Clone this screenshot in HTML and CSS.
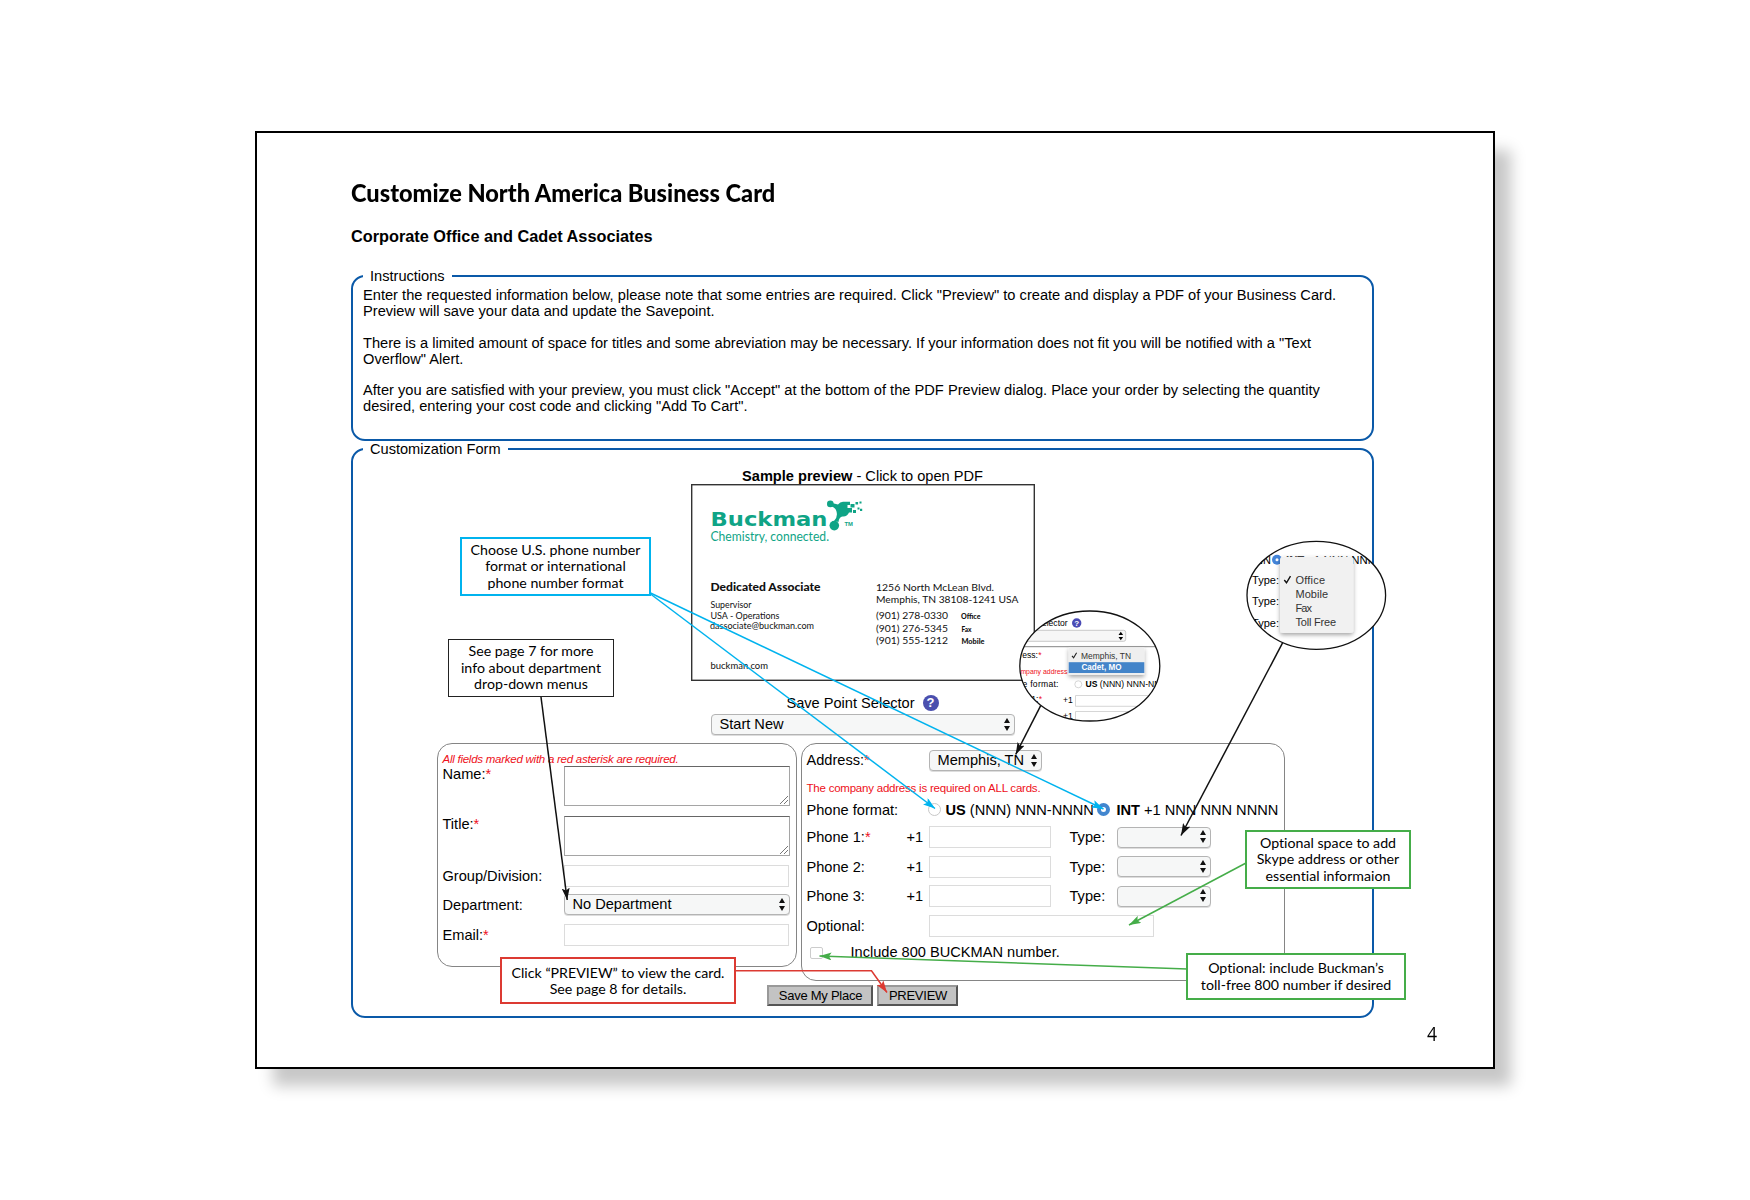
FILE: index.html
```html
<!DOCTYPE html>
<html lang="en">
<head>
<meta charset="utf-8">
<title>Customize North America Business Card</title>
<link rel="stylesheet" href="styles.css">
</head>
<body>
<main class="page">
  <h1 class="title"><span>Customize North America Business Card</span></h1>
  <h2 class="subtitle">Corporate Office and Cadet Associates</h2>

  <fieldset class="box box-instructions">
    <legend>Instructions</legend>
    <p>Enter the requested information below, please note that some entries are required. Click "Preview" to create and display a PDF of your Business Card.<br>Preview will save your data and update the Savepoint.</p>
    <p>There is a limited amount of space for titles and some abreviation may be necessary. If your information does not fit you will be notified with a "Text<br>Overflow" Alert.</p>
    <p>After you are satisfied with your preview, you must click "Accept" at the bottom of the PDF Preview dialog. Place your order by selecting the quantity<br>desired, entering your cost code and clicking "Add To Cart".</p>
  </fieldset>

  <fieldset class="box box-form">
    <legend>Customization Form</legend>
    <div class="form">
      <div class="caption"><b>Sample preview</b> - Click to open PDF</div>
      <svg class="card" width="344" height="197" viewBox="691 484 344 197">
        <rect x="691.7" y="484.7" width="342.6" height="195.6" fill="#fff" stroke="#333" stroke-width="1.4"/>
        <g fill="#0fa486">
          <text class="logo" x="710.5" y="526" textLength="117" lengthAdjust="spacingAndGlyphs">Buckman</text>
          <text class="tagline" x="710.5" y="541" textLength="118.500" lengthAdjust="spacingAndGlyphs">Chemistry, connected.</text>
          <text class="tm" x="844.5" y="526.2" textLength="8.500" lengthAdjust="spacingAndGlyphs">TM</text>
          <circle cx="830.3" cy="503.9" r="3.3"/>
          <circle cx="834.3" cy="525.6" r="4.8"/>
          <path d="M830 502.500 L838 504.500 Q840 501.800 843 501.800 H850 V505 H847.500 V508 H852 V512.500 H849 Q847 517 842.500 516.500 Q839 517 838.500 522 L834 521 Q838 517 836.500 511.500 Q836 507.500 829.500 505.500 Z"/>
          <path d="M850.500 504 h4 v3.500 h-4z M855.500 502 h2.600 v2.600 h-2.600z M859.500 501.500 h2 v2 h-2z M853 510 h3 v3 h-3z M857.500 507.500 h2 v2 h-2z M860 508.800 h2.200 v2.200 h-2.200z"/>
        </g>
        <g class="card-text">
          <text class="card-name" x="710.500" y="591" textLength="110" lengthAdjust="spacingAndGlyphs">Dedicated Associate</text>
          <text class="small" x="710.500" y="608" textLength="41" lengthAdjust="spacingAndGlyphs">Supervisor</text>
          <text class="small" x="710.500" y="618.500" textLength="69" lengthAdjust="spacingAndGlyphs">USA - Operations</text>
          <text class="small" x="710" y="629.300" textLength="104" lengthAdjust="spacingAndGlyphs">dassociate@buckman.com</text>
          <text class="small" x="710.500" y="669" textLength="57.500" lengthAdjust="spacingAndGlyphs">buckman.com</text>
          <text x="876" y="591" textLength="118" lengthAdjust="spacingAndGlyphs">1256 North McLean Blvd.</text>
          <text x="876" y="603" textLength="142.500" lengthAdjust="spacingAndGlyphs">Memphis, TN 38108-1241 USA</text>
          <text x="876" y="619" textLength="72" lengthAdjust="spacingAndGlyphs">(901) 278-0330</text>
          <text x="876" y="631.500" textLength="72" lengthAdjust="spacingAndGlyphs">(901) 276-5345</text>
          <text x="876" y="643.800" textLength="72" lengthAdjust="spacingAndGlyphs">(901) 555-1212</text>
          <text class="tag" x="961" y="619.300" textLength="19.500" lengthAdjust="spacingAndGlyphs">Office</text>
          <text class="tag" x="961.500" y="631.700" textLength="10" lengthAdjust="spacingAndGlyphs">Fax</text>
          <text class="tag" x="961.500" y="644" textLength="23" lengthAdjust="spacingAndGlyphs">Mobile</text>
        </g>
      </svg>
      <div class="save-label">Save Point Selector <span class="help">?</span></div>
      <div class="select select-save">Start New<i class="arrows"></i></div>

      <div class="panels">
        <section class="panel panel-left">
          <p class="note note-italic">All fields marked with a red asterisk are required.</p>
          <div class="row row-area"><label>Name:<em>*</em></label><div class="area"><svg width="9" height="9" viewBox="0 0 9 9"><path d="M1 9 L9 1 M5 9 L9 5"/></svg></div></div>
          <div class="row row-area row-title"><label>Title:<em>*</em></label><div class="area"><svg width="9" height="9" viewBox="0 0 9 9"><path d="M1 9 L9 1 M5 9 L9 5"/></svg></div></div>
          <div class="row row-group"><label>Group/Division:</label><div class="input"></div></div>
          <div class="row row-dept"><label>Department:</label><div class="select">No Department<i class="arrows"></i></div></div>
          <div class="row"><label>Email:<em>*</em></label><div class="input"></div></div>
        </section>
        <section class="panel panel-right">
          <div class="row row-address"><label>Address:<em>*</em></label><div class="select select-address">Memphis, TN<i class="arrows"></i></div></div>
          <p class="note">The company address is required on ALL cards.</p>
          <div class="row row-format"><label>Phone format:</label><span class="radio"></span><span class="opt opt-us"><b>US</b> (NNN) NNN-NNNN</span><span class="radio radio-on"></span><span class="opt"><b>INT</b> +1 NNN NNN NNNN</span></div>
          <div class="row row-phone"><label>Phone 1:<em>*</em></label><span class="prefix">+1</span><div class="input"></div><span class="type">Type:</span><div class="select select-type"><i class="arrows"></i></div></div>
          <div class="row row-phone"><label>Phone 2:</label><span class="prefix">+1</span><div class="input"></div><span class="type">Type:</span><div class="select select-type"><i class="arrows"></i></div></div>
          <div class="row row-phone"><label>Phone 3:</label><span class="prefix">+1</span><div class="input"></div><span class="type">Type:</span><div class="select select-type"><i class="arrows"></i></div></div>
          <div class="row row-optional"><label>Optional:</label><div class="input"></div></div>
          <div class="row row-check"><span class="checkbox"></span><span class="check-label">Include 800 BUCKMAN number.</span></div>
        </section>
      </div>

      <div class="buttons"><div class="button button-save">Save My Place</div><div class="button button-preview">PREVIEW</div></div>
    </div>
  </fieldset>

  <div class="page-number">4</div>

  <svg class="overlay" width="1236" height="934" viewBox="257 133 1236 934">
    <defs>
      <clipPath id="lens-a"><ellipse cx="1089.800" cy="666" rx="70" ry="55"/></clipPath>
      <clipPath id="lens-b"><ellipse cx="1316.300" cy="595.300" rx="69.300" ry="54"/></clipPath>
      <filter id="soft" x="-20%" y="-20%" width="140%" height="150%"><feDropShadow dx="0" dy="2" stdDeviation="2" flood-opacity=".35"/></filter>
      <marker id="tip" viewBox="0 0 12 8" refX="12" refY="4" markerWidth="12" markerHeight="8" markerUnits="userSpaceOnUse" orient="auto"><path d="M0 0 L12 4 L0 8 L2.500 4 Z" fill="context-stroke"/></marker>
    </defs>

    <g class="lens-text" clip-path="url(#lens-a)">
      <rect x="1019" y="610" width="142" height="112" fill="#fff"/>
      <text x="1067.700" y="625.800" text-anchor="end">Save Point Selector</text>
      <circle cx="1076.700" cy="623" r="4.700" fill="#4a4bb5"/>
      <text class="q" x="1076.700" y="626" text-anchor="middle">?</text>
      <rect x="1000" y="630.300" width="125.700" height="11" rx="2" fill="#f6f6f6" stroke="#bbb" stroke-width=".8"/>
      <path d="M1118.500 635 l2.300 -3.200 2.300 3.200z M1118.500 637 l2.300 3.200 2.300 -3.200z"/>
      <path d="M1010 646.700 H1165" stroke="#777" stroke-width=".9"/>
      <text x="1038" y="657.800" text-anchor="end">Address:</text><text class="red" x="1038.300" y="657.800">*</text>
      <text class="red tiny" x="1067.500" y="673.500" text-anchor="end">The company address</text>
      <g filter="url(#soft)"><rect x="1068.700" y="647.300" width="75.600" height="27.700" fill="#efefef"/></g>
      <rect x="1068.700" y="662.200" width="75.600" height="10.800" fill="#4384c9"/>
      <path d="M1072 655.800 l1.600 2 3 -5" fill="none" stroke="#222" stroke-width="1.100"/>
      <text x="1081" y="658.600" textLength="50" lengthAdjust="spacingAndGlyphs" fill="#333">Memphis, TN</text>
      <text class="picked" x="1081.500" y="670" textLength="40" lengthAdjust="spacingAndGlyphs">Cadet, MO</text>
      <text x="1058.500" y="686.900" text-anchor="end" textLength="57">Phone format:</text>
      <circle cx="1078.300" cy="684.300" r="3.500" fill="none" stroke="#ccc" stroke-width=".8"/>
      <text x="1085.500" y="687.200"><tspan font-weight="bold">US</tspan> (NNN) NNN-NNNN</text>
      <text x="1038.500" y="702" text-anchor="end">Phone 1:</text><text class="red" x="1038.800" y="702">*</text>
      <text x="1063" y="702.800">+1</text><text x="1063" y="719">+1</text>
      <path d="M1166 695.500 H1075.500 V706.300 H1166 M1166 711.500 H1075.500 V722" fill="none" stroke="#ccc" stroke-width=".8"/>
    </g>
    <ellipse class="lens" cx="1089.800" cy="666" rx="70" ry="55"/>

    <g class="lens-text lens-text-b" clip-path="url(#lens-b)">
      <rect x="1246" y="541" width="141" height="110" fill="#fff"/>
      <text x="1271" y="563.500" text-anchor="end">NNNN</text>
      <circle cx="1277" cy="559.800" r="5" fill="#4384d8"/><circle cx="1277" cy="559.800" r="1.500" fill="#fff"/>
      <text x="1286" y="563.500" textLength="90" lengthAdjust="spacingAndGlyphs"><tspan font-weight="bold">INT</tspan> +1 NNN NNN</text>
      <text x="1279" y="583.500" text-anchor="end">Type:</text>
      <text x="1279" y="605" text-anchor="end">Type:</text>
      <text x="1279" y="626.500" text-anchor="end">Type:</text>
      <g filter="url(#soft)"><rect x="1280" y="556.700" width="73.300" height="76.300" rx="3" fill="#f1f1f1"/></g>
      <path d="M1284.300 580 l2.200 2.800 4 -6.600" fill="none" stroke="#111" stroke-width="1.400"/>
      <g fill="#333">
        <text x="1295.500" y="583.500" textLength="29.500">Office</text>
        <text x="1295.500" y="597.500" textLength="32.500">Mobile</text>
        <text x="1295.500" y="612" textLength="16.500">Fax</text>
        <text x="1295.500" y="626" textLength="40.500">Toll Free</text>
      </g>
    </g>
    <ellipse class="lens" cx="1316.300" cy="595.300" rx="69.300" ry="54"/>

    <g class="pointer pointer-black">
      <path d="M541 697 L567.200 900"/>
      <path d="M1040.700 705.700 L1015.700 754.500"/>
      <path d="M1282.700 642.700 L1181 835.500"/>
    </g>
    <g class="pointer pointer-blue">
      <path d="M650.500 594 L935 808.500"/>
      <path d="M650.500 593 L1103.500 809"/>
    </g>
    <path class="pointer pointer-red" d="M735 970.700 H871.500 L887 992.500"/>
    <g class="pointer pointer-green">
      <path d="M1246 863 L1129 925"/>
      <path d="M1187.500 969 L819.500 956"/>
    </g>
  </svg>

  <aside class="callout callout-phone">Choose U.S. phone number<br>format or international<br>phone number format</aside>
  <aside class="callout callout-dept">See page 7 for more<br>info about department<br>drop-down menus</aside>
  <aside class="callout callout-preview">Click “PREVIEW” to view the card.<br>See page 8 for details.</aside>
  <aside class="callout callout-skype">Optional space to add<br>Skype address or other<br>essential informaion</aside>
  <aside class="callout callout-tollfree">Optional: include Buckman’s<br>toll-free 800 number if desired</aside>
</main>
</body>
</html>
```
FILE: styles.css
```css
* { box-sizing: border-box; }

body {
  margin: 0;
  padding: 131px 255px;
  height: 1200px;
  overflow: hidden;
  background: #fff;
  color: #000;
  font: 14.6px/16px "Liberation Sans", Arial, sans-serif;
}

.page {
  position: relative;
  width: 1240px;
  height: 938px;
  padding: 44px 119px 0 94px;
  border: 2px solid #000;
  background: #fff;
  box-shadow: 17px 18px 14px -1px rgba(0, 0, 0, .22);
}

.title { margin: 0; height: 30px; font: 900 25px/30px Lato, sans-serif; white-space: nowrap; }
.title span { display: inline-block; transform: scaleX(.942); transform-origin: 0 50%; }
.subtitle { margin: 20px 0 0; height: 18px; font-size: 16.3px; line-height: 18px; }

.box {
  display: block;
  width: 1023px;
  min-width: 0;
  margin: 0;
  padding: 0 10px;
  border: 2px solid #0a59a8;
  border-radius: 14px;
}
.box legend { height: 16px; padding: 0 7px; line-height: 17px; }
.box-instructions { height: 173px; margin-top: 23px; padding-top: 3px; }
.box-instructions p { margin: 0 0 16px; font-size: 14.65px; line-height: 16px; white-space: nowrap; }
.box-instructions p + p { margin-bottom: 15px; }
.box-form { height: 577px; }

.form { display: flex; flex-direction: column; align-items: center; padding-top: 11px; }
.caption { height: 16px; line-height: 17px; }
.card { display: block; }

.card-text { font-family: Lato, sans-serif; font-size: 10px; fill: #111; }
.card-text .card-name { font-size: 10.5px; font-weight: 900; }
.card-text .small { font-size: 8.5px; }
.card-text .tag { font-size: 6.8px; font-weight: 900; }
.logo { font: bold 19.5px "DejaVu Sans", sans-serif; }
.tagline { font: 13.4px Lato, sans-serif; }
.tm { font: bold 5px "Liberation Sans", sans-serif; }

.save-label { display: flex; align-items: center; gap: 8px; height: 16px; margin-top: 14px; }
.help {
  width: 16px;
  height: 16px;
  border-radius: 50%;
  background: #4a4fae;
  color: #fff;
  font-size: 13px;
  font-weight: bold;
  text-align: center;
}

.select {
  display: flex;
  align-items: center;
  justify-content: space-between;
  width: 226px;
  height: 21px;
  padding: 0 4px 1px 8px;
  border: 1px solid #b4b4b4;
  border-radius: 4px;
  background: #f6f7f7;
  box-shadow: 0 1px 0 #ddd;
}
.arrows { display: grid; gap: 3px; margin-left: auto; }
.arrows::before, .arrows::after {
  content: "";
  border: 3.500px solid transparent;
}
.arrows::before { border-top: 0; border-bottom: 5px solid #111; }
.arrows::after { border-bottom: 0; border-top: 5px solid #111; }
.select-save { width: 304px; margin-top: 3px; }

.panels { display: flex; align-items: flex-start; gap: 4px; margin: 8px 4px 0 0; }
.panel { border: 1px solid #858585; border-radius: 15px; }
.panel-left { width: 360px; height: 224px; padding: 8px 0 0 5px; }
.panel-right { width: 484px; height: 238px; padding: 6px 0 0 5px; }

.note { margin: 0; height: 14px; color: #ee1020; font-size: 11.5px; letter-spacing: -.22px; line-height: 14px; white-space: nowrap; }
.note-italic { font-style: italic; letter-spacing: -.25px; }
.row { display: flex; align-items: center; height: 22px; white-space: nowrap; }
.row em { color: #ee1020; font-style: normal; }
.panel-left label { width: 121px; }
.panel-right label { width: 122px; }

.row-area { align-items: flex-start; height: 50px; }
.row-title { height: 49px; }
.area {
  display: flex;
  align-items: flex-end;
  justify-content: flex-end;
  width: 226px;
  height: 40px;
  padding: 1px;
  border: 1px solid #a5a5a5;
  border-top-color: #666;
}
.area path { fill: none; stroke: #777; stroke-width: 1; }
.input { width: 225px; height: 22px; border: 1px solid #dcdcdc; }
.row-group { margin-bottom: 7px; }
.row-dept { height: 21px; margin-bottom: 9px; }

.row-address { height: 21px; margin-bottom: 10px; }
.row-address label { padding-bottom: 1px; }
.select-address { width: 113px; }
.row-format { height: 21px; margin-top: 4px; }
.radio {
  flex: none;
  width: 13px;
  height: 13px;
  margin-left: -1px;
  border: 1px solid #c8c8c8;
  border-radius: 50%;
}
.radio-on { margin-left: 3px; border: 4.500px solid #4286cf; background: #fff; }
.opt { margin-left: 7px; }
.opt-us { width: 148px; margin-left: 5px; }
.row-phone { margin-top: 5px; }
.row-format + .row-phone { margin-top: 6px; }
.row-phone + .row-phone { margin-top: 7.500px; }
.row-phone label { width: 100px; }
.prefix { width: 22px; }
.row-phone .input { width: 122px; }
.type { width: 47px; margin-left: 19px; }
.select-type { width: 94px; }
.row-optional { margin-top: 8px; }
.row-check { margin-top: 5px; }
.check-label { padding-bottom: 2px; }
.checkbox { width: 13px; height: 12px; margin: 0 28px 0 3px; border: 1px solid #ccc; border-radius: 2px; }

.buttons { display: flex; gap: 4px; margin-top: 4px; }
.button {
  height: 21px;
  padding-left: 1px;
  border: 2px solid;
  border-color: #999 #555 #555 #999;
  background: #c3c3c3;
  font-size: 13px;
  letter-spacing: -.25px;
  line-height: 17px;
  text-align: center;
}
.button-save { width: 106px; }
.button-preview { width: 81px; }

.page-number { position: absolute; left: 1170px; top: 889px; font: 20px/24px "Open Sans", sans-serif; transform: scaleX(.88); transform-origin: 0 50%; }

.overlay { position: absolute; left: 0; top: 0; }
.lens { fill: none; stroke: #111; stroke-width: 1.300; }
.lens-text { font-size: 8.600px; }
.lens-text-b { font-size: 11px; }
.lens-text .red { fill: #ee1020; }
.lens-text .tiny { font-size: 6.900px; }
.lens-text .q { fill: #fff; font-weight: bold; font-size: 8px; }
.lens-text .picked { fill: #fff; font-weight: bold; }
.pointer, .pointer path { fill: none; stroke-width: 1.500; }
.pointer path, path.pointer { marker-end: url(#tip); }
.pointer-black { stroke: #111; }
.pointer-blue { stroke: #00b3ee; }
.pointer-red { stroke: #dc3a32; }
.pointer-green { stroke: #45ad49; }

.callout {
  position: absolute;
  display: grid;
  align-content: center;
  border: 2px solid #00b3ee;
  background: #fff;
  font: 14.2px/16.4px Lato, sans-serif;
  font-variant-ligatures: none;
  text-align: center;
  white-space: nowrap;
}
.callout-phone { left: 203px; top: 404px; width: 191px; height: 59px; }
.callout-dept { left: 191px; top: 506px; width: 166px; height: 58px; border: 1.500px solid #222; }
.callout-preview { left: 243px; top: 824px; width: 236px; height: 47px; padding-top: 1px; border-color: #dc3a32; }
.callout-skype { left: 988px; top: 697px; width: 166px; height: 59px; border-color: #45ad49; }
.callout-tollfree { left: 929px; top: 820px; width: 220px; height: 47px; border-color: #45ad49; }
```
